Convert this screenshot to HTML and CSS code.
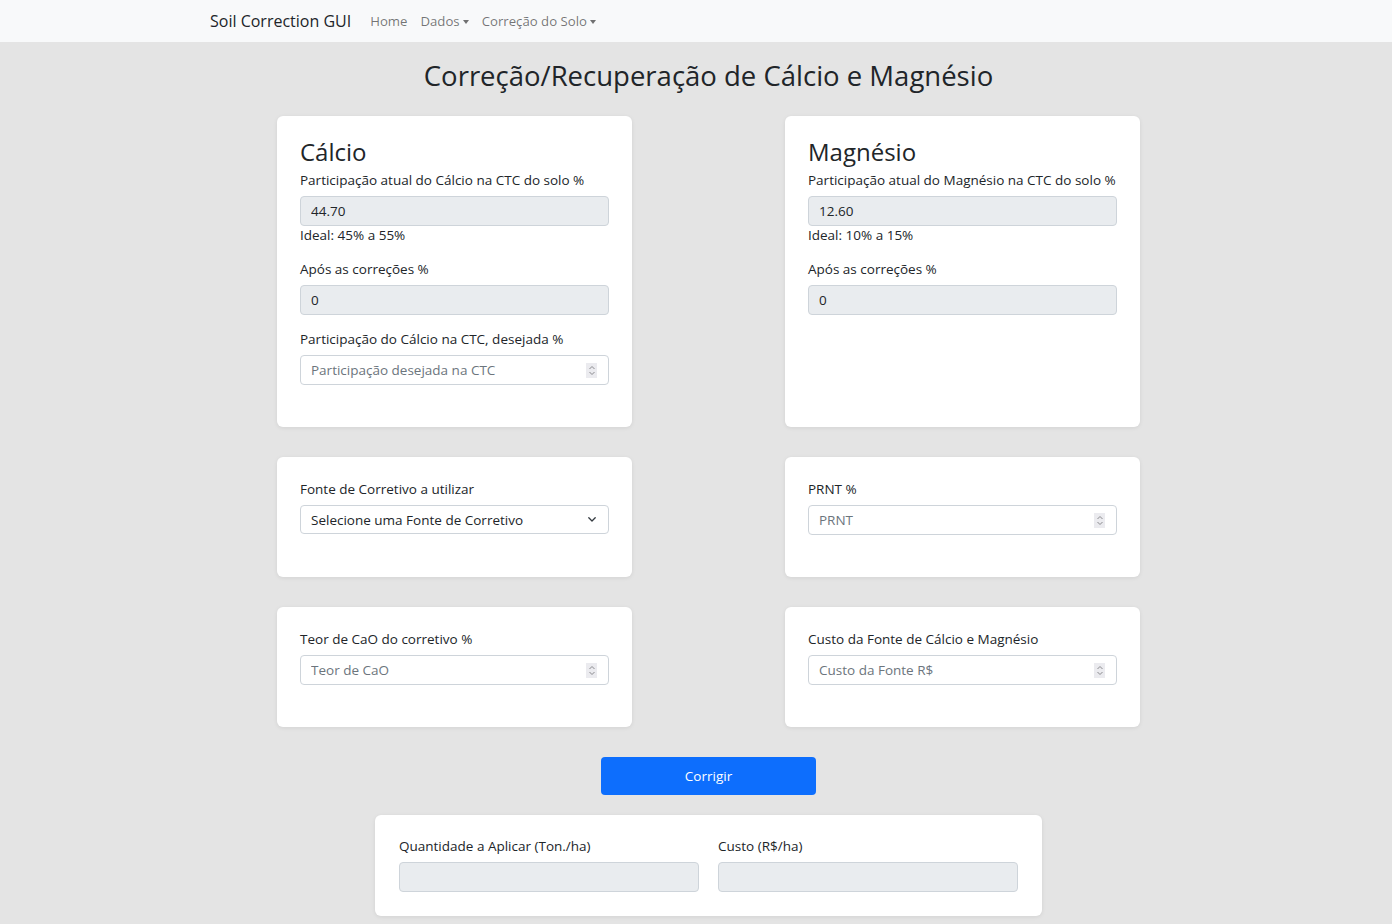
FILE: index.html
```html
<!DOCTYPE html>
<html lang="pt-BR">
<head>
<meta charset="utf-8">
<title>Soil Correction GUI</title>
<link rel="stylesheet" href="styles.css">
</head>
<body>
<nav class="navbar">
  <a class="brand" href="#">Soil Correction GUI</a>
  <ul class="nav-links">
    <li><a href="#">Home</a></li>
    <li><a href="#" class="dropdown">Dados<span class="caret"></span></a></li>
    <li><a href="#" class="dropdown">Correção do Solo<span class="caret"></span></a></li>
  </ul>
</nav>
<main class="main">
  <h1 class="title">Correção/Recuperação de Cálcio e Magnésio</h1>
  <div class="grid">
    <section class="card">
      <h2 class="card-title">Cálcio</h2>
      <label class="label">Participação atual do Cálcio na CTC do solo %</label>
      <input class="field readonly" type="text" value="44.70" readonly>
      <div class="hint">Ideal: 45% a 55%</div>
      <label class="label spaced">Após as correções %</label>
      <input class="field readonly" type="text" value="0" readonly>
      <label class="label spaced">Participação do Cálcio na CTC, desejada %</label>
      <div class="num-wrap">
        <input class="field" type="text" inputmode="decimal" placeholder="Participação desejada na CTC">
        <span class="spinner"><svg width="8" height="11" viewBox="0 0 8 11"><path d="M1.5 4L4 1.5 6.5 4M1.5 7L4 9.5 6.5 7" fill="none" stroke="#8a8a8e" stroke-width="1"/></svg></span>
      </div>
    </section>
    <section class="card">
      <h2 class="card-title">Magnésio</h2>
      <label class="label">Participação atual do Magnésio na CTC do solo %</label>
      <input class="field readonly" type="text" value="12.60" readonly>
      <div class="hint">Ideal: 10% a 15%</div>
      <label class="label spaced">Após as correções %</label>
      <input class="field readonly" type="text" value="0" readonly>
    </section>
    <section class="card">
      <label class="label">Fonte de Corretivo a utilizar</label>
      <div class="select-wrap">
        <select class="field select">
          <option>Selecione uma Fonte de Corretivo</option>
        </select>
        <svg class="chevron" width="8" height="5" viewBox="0 0 8 5"><path d="M0.8 0.8L4 4 7.2 0.8" fill="none" stroke="#343a40" stroke-width="1.3" stroke-linecap="round" stroke-linejoin="round"/></svg>
      </div>
    </section>
    <section class="card">
      <label class="label">PRNT %</label>
      <div class="num-wrap">
        <input class="field" type="text" inputmode="decimal" placeholder="PRNT">
        <span class="spinner"><svg width="8" height="11" viewBox="0 0 8 11"><path d="M1.5 4L4 1.5 6.5 4M1.5 7L4 9.5 6.5 7" fill="none" stroke="#8a8a8e" stroke-width="1"/></svg></span>
      </div>
    </section>
    <section class="card">
      <label class="label">Teor de CaO do corretivo %</label>
      <div class="num-wrap">
        <input class="field" type="text" inputmode="decimal" placeholder="Teor de CaO">
        <span class="spinner"><svg width="8" height="11" viewBox="0 0 8 11"><path d="M1.5 4L4 1.5 6.5 4M1.5 7L4 9.5 6.5 7" fill="none" stroke="#8a8a8e" stroke-width="1"/></svg></span>
      </div>
    </section>
    <section class="card">
      <label class="label">Custo da Fonte de Cálcio e Magnésio</label>
      <div class="num-wrap">
        <input class="field" type="text" inputmode="decimal" placeholder="Custo da Fonte R$">
        <span class="spinner"><svg width="8" height="11" viewBox="0 0 8 11"><path d="M1.5 4L4 1.5 6.5 4M1.5 7L4 9.5 6.5 7" fill="none" stroke="#8a8a8e" stroke-width="1"/></svg></span>
      </div>
    </section>
  </div>
  <button class="btn" type="button">Corrigir</button>
  <section class="card result">
    <div class="result-col">
      <label class="label">Quantidade a Aplicar (Ton./ha)</label>
      <input class="field readonly" type="text" readonly>
    </div>
    <div class="result-col">
      <label class="label">Custo (R$/ha)</label>
      <input class="field readonly" type="text" readonly>
    </div>
  </section>
</main>
</body>
</html>
```
FILE: styles.css
```css
* { box-sizing: border-box; }
html, body { margin: 0; padding: 0; }
body {
  background: #e4e4e4;
  font-family: "Open Sans", "Noto Sans", sans-serif;
  font-size: 13.5px;
  line-height: 1.5;
  color: #212529;
  min-height: 924px;
}
.navbar {
  height: 42px;
  background: #f8f9fa;
  display: flex;
  align-items: center;
  padding-left: 210px;
}
.brand {
  font-size: 16px;
  color: #212529;
  text-decoration: none;
  margin-right: 19px;
}
.nav-links {
  list-style: none;
  display: flex;
  gap: 13px;
  margin: 0;
  padding: 0;
}
.nav-links a {
  color: rgba(0,0,0,0.55);
  text-decoration: none;
  font-size: 13.2px;
}
.caret {
  display: inline-block;
  margin-left: 3px;
  vertical-align: 2px;
  border-top: 4px solid rgba(0,0,0,0.55);
  border-left: 3px solid transparent;
  border-right: 3px solid transparent;
}
.main {
  padding-left: 25px;
  display: flex;
  flex-direction: column;
  align-items: center;
  padding-bottom: 8px;
}
.title {
  font-size: 27.5px;
  font-weight: 500;
  line-height: 32px;
  margin: 18px 0 24px;
}
.grid {
  display: grid;
  grid-template-columns: 355px 355px;
  column-gap: 153px;
  row-gap: 30px;
}
.card {
  background: #fff;
  border-radius: 6px;
  box-shadow: 0 1px 4px rgba(0,0,0,0.08);
  padding: 22px 23px 42px;
  display: flex;
  flex-direction: column;
}
.card-title {
  font-size: 24px;
  font-weight: 500;
  line-height: 28px;
  margin: 0 0 4px;
}
.label {
  display: block;
  line-height: 20px;
  margin-bottom: 6px;
}
.label.spaced { margin-top: 14px; }
.hint { line-height: 19px; }
.field {
  display: block;
  width: 100%;
  height: 30px;
  border: 1px solid #ced4da;
  border-radius: 4px;
  padding: 0 10px;
  font-family: inherit;
  font-size: 13.5px;
  color: #212529;
  background: #fff;
  outline: none;
}
.field::placeholder { color: #6c757d; }
.field.readonly { background: #e9ecef; }
.num-wrap { position: relative; }
.spinner {
  position: absolute;
  right: 12px;
  top: 8px;
  width: 11px;
  height: 15px;
  background: #ebebef;
  display: flex;
  align-items: center;
  justify-content: center;
}
.select-wrap { position: relative; }
.select {
  appearance: none;
  -webkit-appearance: none;
  height: 29px;
}
.chevron {
  position: absolute;
  right: 13px;
  top: 12px;
  pointer-events: none;
}
.btn {
  margin-top: 30px;
  width: 215px;
  height: 38px;
  border: none;
  border-radius: 4px;
  background: #0d6efd;
  color: #fff;
  font-family: inherit;
  font-size: 13.5px;
}
.result {
  margin-top: 20px;
  width: 667px;
  flex-direction: row;
  gap: 19px;
  padding: 21px 24px 24px;
}
.result-col { flex: 1; }
```
